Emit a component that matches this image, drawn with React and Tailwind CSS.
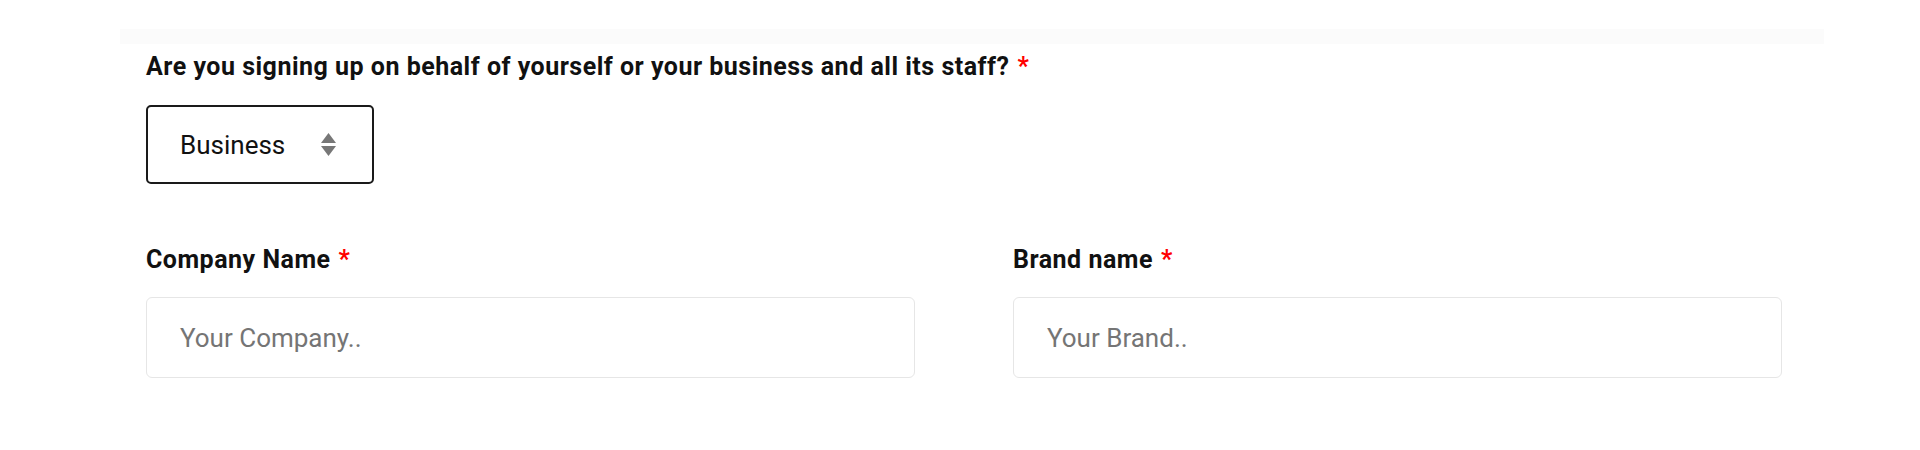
export default function App() {
  return (
    <div className="w-[1920px] h-[450px] bg-white pt-[29px] font-['Roboto',sans-serif] text-[#111]">
      {/* faint top strip */}
      <div className="ml-[120px] w-[1704px] h-[15px] bg-[#fbfbfb]" />

      <div className="pl-[146px]">
        <p className="mt-[8px] text-[25px] leading-[30px] font-bold tracking-[0.5px]">
          Are you signing up on behalf of yourself or your business and all its staff?
          <span className="ml-[8px] text-[#ff0000]">*</span>
        </p>

        <div className="mt-[23px] w-[228px] h-[79px] border-2 border-[#1a1a1a] rounded-[5px] flex items-center justify-between pl-[32px] pr-[36px]">
          <span className="text-[26px] leading-none">Business</span>
          <svg width="15" height="23" viewBox="0 0 15 23" fill="#777">
            <path d="M7.5 0 L15 10 H0 Z" />
            <path d="M0 13 H15 L7.5 23 Z" />
          </svg>
        </div>

        <div className="mt-[61px] flex gap-[98px]">
          <Field label="Company Name" placeholder="Your Company.." />
          <Field label="Brand name" placeholder="Your Brand.." />
        </div>
      </div>
    </div>
  );
}

function Field({ label, placeholder }) {
  return (
    <div className="w-[769px]">
      <p className="text-[25px] leading-[30px] font-bold tracking-[0.5px]">
        {label}
        <span className="ml-[8px] text-[#ff0000]">*</span>
      </p>
      <div className="mt-[22px] h-[81px] border border-[#e6e6e6] rounded-[6px] flex items-center pl-[33px]">
        <span className="text-[26px] leading-none text-[#757575]">{placeholder}</span>
      </div>
    </div>
  );
}
